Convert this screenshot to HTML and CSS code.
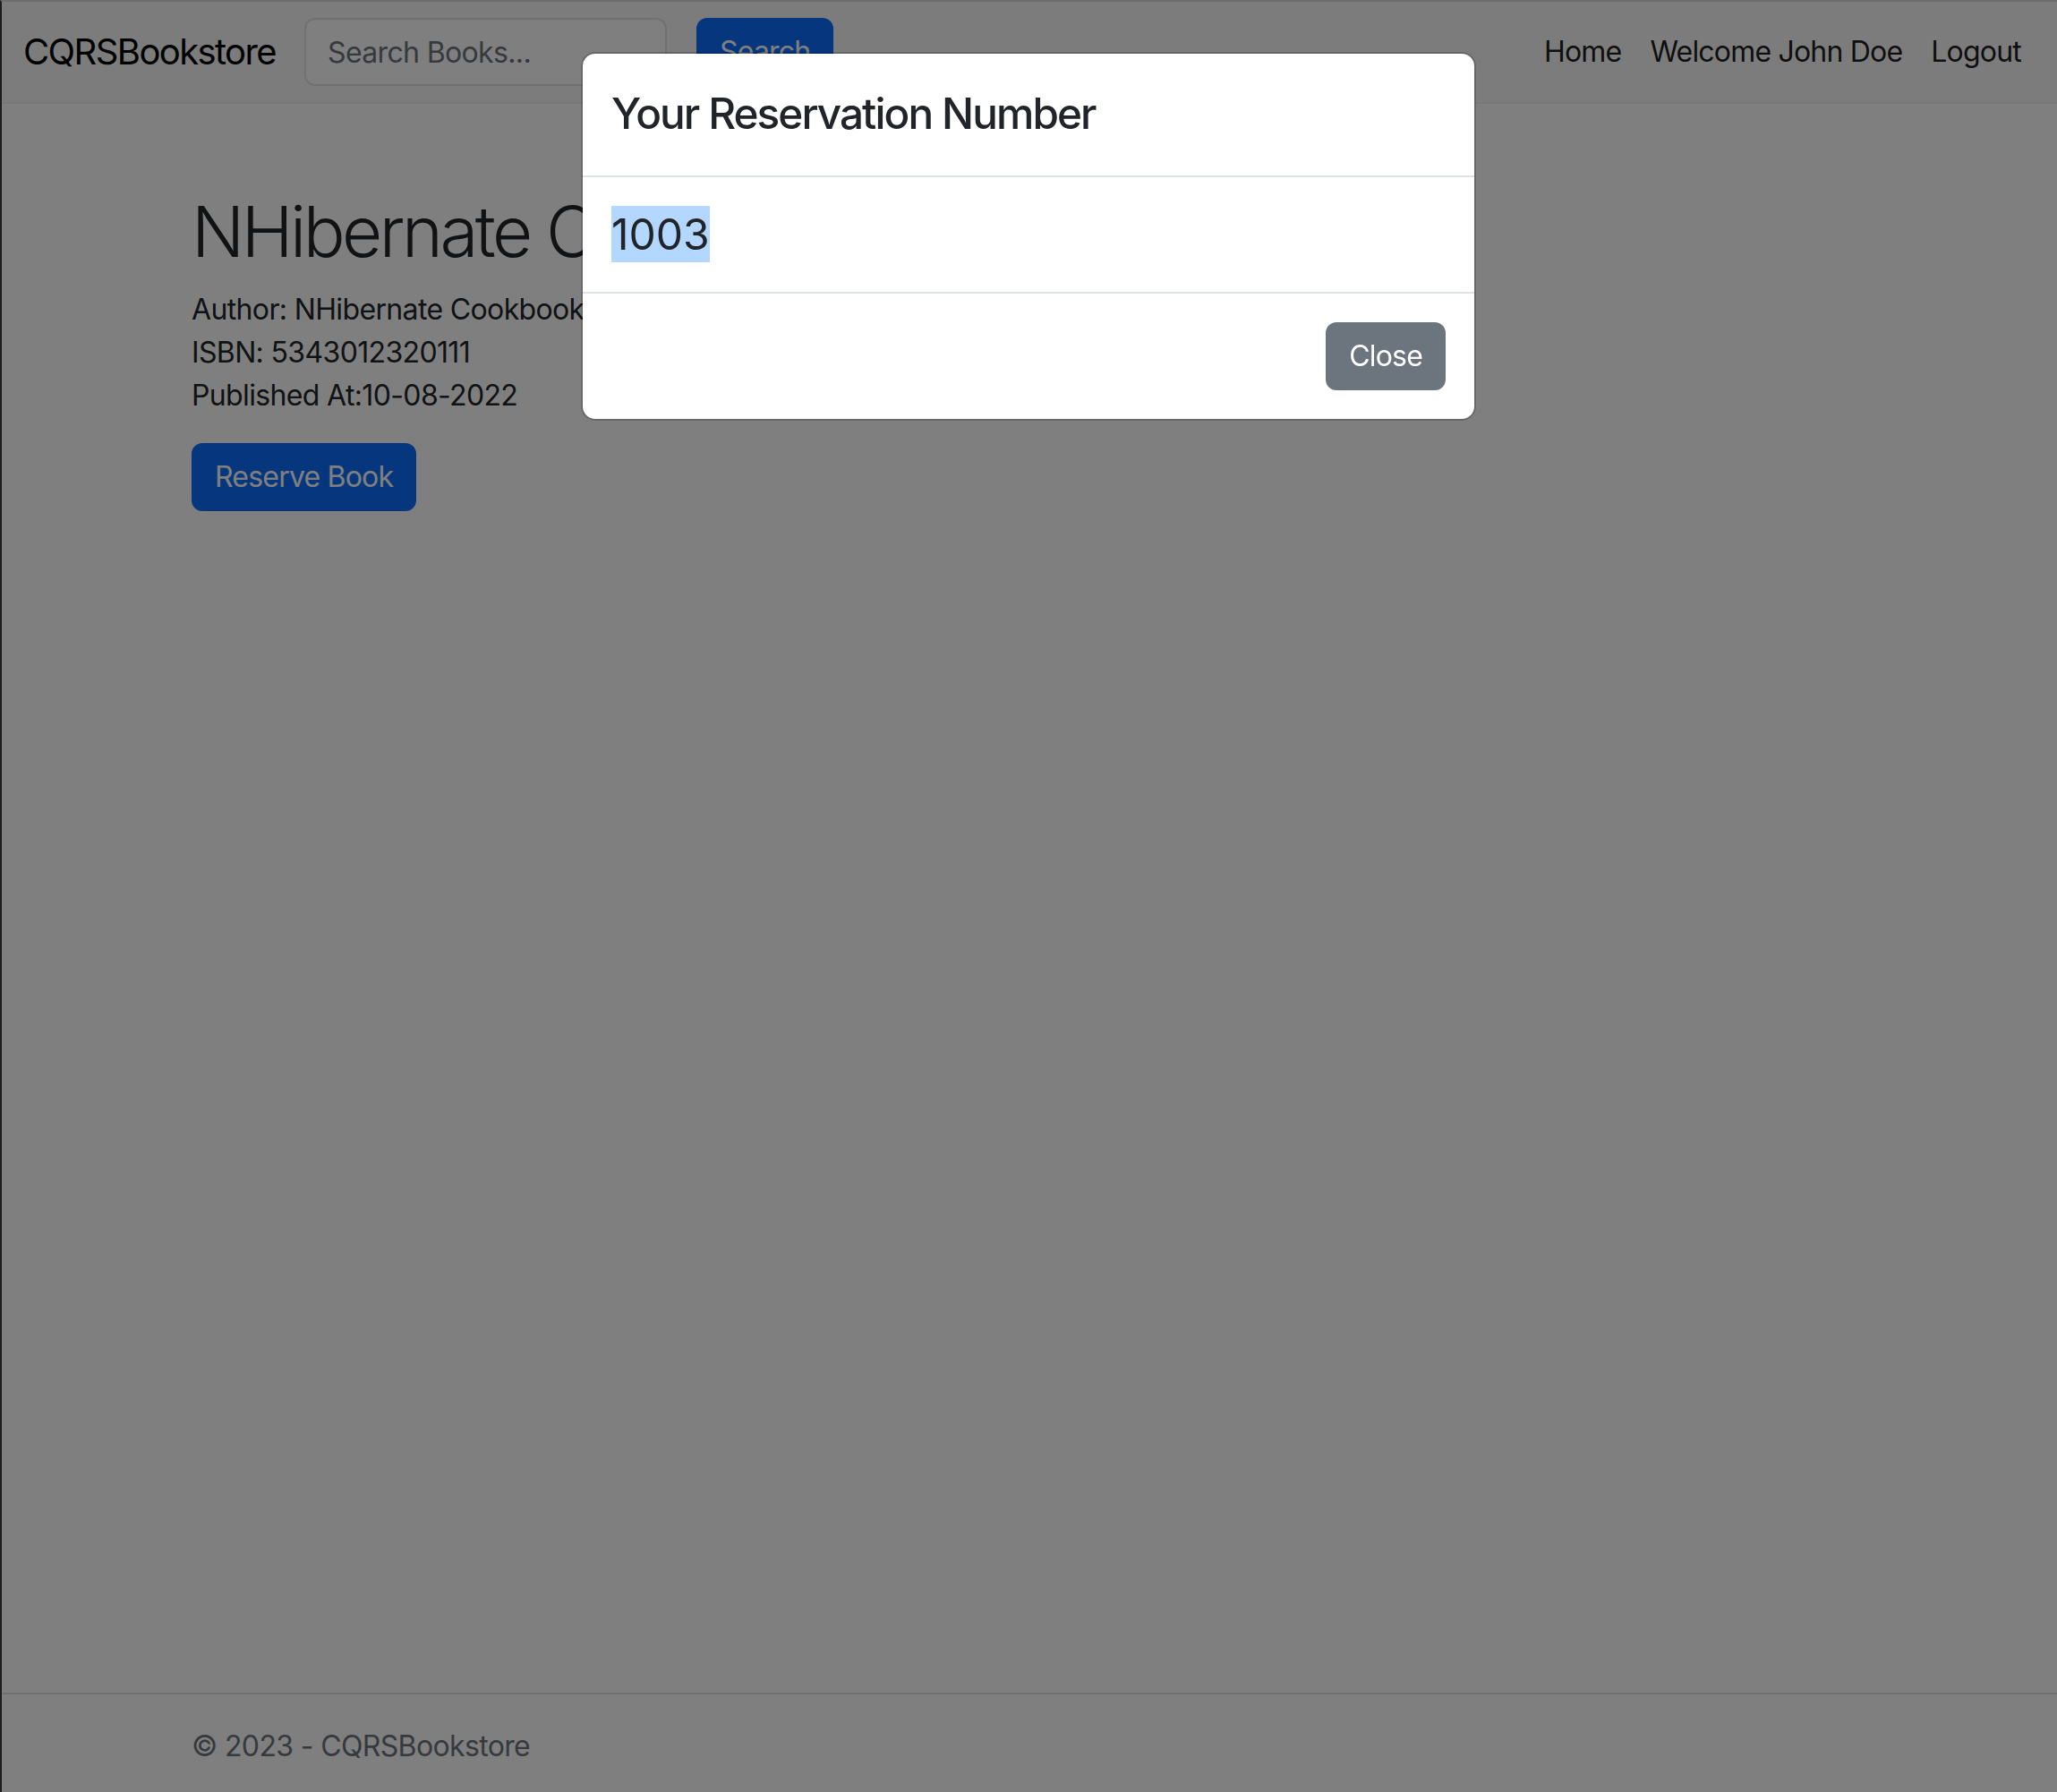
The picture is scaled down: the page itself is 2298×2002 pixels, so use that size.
FILE: index.html
```html
<!DOCTYPE html>
<html lang="en">
<head>
<meta charset="utf-8">
<title>CQRSBookstore</title>
<link rel="stylesheet" href="styles.css">
</head>
<body>
<div class="page">
  <header class="navbar">
    <a class="brand" href="#">CQRSBookstore</a>
    <form class="search">
      <input class="search-input" type="text" placeholder="Search Books...">
      <button class="btn btn-primary" type="button">Search</button>
    </form>
    <nav class="nav">
      <a class="nav-link" href="#">Home</a>
      <span class="nav-link">Welcome John Doe</span>
      <a class="nav-link" href="#">Logout</a>
    </nav>
  </header>
  <main class="main">
    <div class="container">
      <h1 class="title">NHibernate Cookbook</h1>
      <div class="meta">
        <div>Author: NHibernate Cookbook</div>
        <div>ISBN: 5343012320111</div>
        <div>Published At:10-08-2022</div>
      </div>
      <button class="btn btn-primary" type="button">Reserve Book</button>
    </div>
  </main>
  <footer class="footer">
    <div class="container">© 2023 - CQRSBookstore</div>
  </footer>
</div>
<div class="backdrop"></div>
<div class="modal">
  <div class="modal-dialog">
    <div class="modal-header">
      <h4 class="modal-title">Your Reservation Number</h4>
    </div>
    <div class="modal-body">
      <span class="selected">1003</span>
    </div>
    <div class="modal-footer">
      <button class="btn btn-secondary" type="button">Close</button>
    </div>
  </div>
</div>
</body>
</html>
```

FILE: styles.css
```css
html, body {
  margin: 0;
  padding: 0;
  overflow: hidden;
  background: #ffffff;
}
body {
  font-family: Inter, "Liberation Sans", sans-serif;
  font-size: 32px;
  line-height: 1.5;
  letter-spacing: -0.02em;
  color: #212529;
}
.page {
  border-top: 2px solid #dcdcdc;
  border-left: 2px solid #3a3a3a;
  min-height: 2007px;
  display: flex;
  flex-direction: column;
}
.navbar {
  display: flex;
  align-items: center;
  padding: 16px 24px;
  background: #f9f9f9;
  border-bottom: 2px solid #f0f0f0;
}
.brand {
  font-size: 40px;
  line-height: 60px;
  letter-spacing: -0.04em;
  padding: 10px 0;
  margin-right: 32px;
  color: #000;
  text-decoration: none;
  white-space: nowrap;
}
.search {
  display: flex;
  align-items: center;
  gap: 33px;
}
.search-input {
  width: 405px;
  height: 76px;
  box-sizing: border-box;
  padding: 12px 24px;
  font-family: inherit;
  font-size: 32px;
  letter-spacing: -0.02em;
  color: #212529;
  border: 2px solid #dee2e6;
  border-radius: 12px;
  background: #fff;
}
.search-input::placeholder {
  color: #6c757d;
}
.btn {
  font-family: inherit;
  font-size: 32px;
  line-height: 48px;
  letter-spacing: -0.025em;
  padding: 12px 24px;
  border: 2px solid transparent;
  border-radius: 12px;
  cursor: pointer;
}
.btn-primary {
  background: #0d6efd;
  border-color: #0d6efd;
  color: #fff;
}
.btn-secondary {
  background: #6c757d;
  border-color: #6c757d;
  color: #fff;
  margin: 8px;
}
.nav {
  margin-left: auto;
  display: flex;
}
.nav-link {
  padding: 16px;
  line-height: 48px;
  letter-spacing: -0.025em;
  color: rgba(0, 0, 0, 0.9);
  text-decoration: none;
  white-space: nowrap;
}
.main {
  flex: 1;
  padding-top: 96px;
}
.container {
  width: 1920px;
  box-sizing: border-box;
  padding: 0 24px;
  margin: 0 auto;
}
.title {
  font-size: 78px;
  font-weight: 300;
  line-height: 1.2;
  letter-spacing: -0.045em;
  margin: 0 0 16px;
}
.meta {
  margin-bottom: 29px;
}
.footer {
  border-top: 2px solid #dee2e6;
  line-height: 116px;
  color: #6c757d;
  white-space: nowrap;
}
.backdrop {
  position: fixed;
  inset: 0;
  background: rgba(0, 0, 0, 0.5);
}
.modal {
  position: fixed;
  inset: 0;
  padding-top: 58px;
}
.modal-dialog {
  width: 1000px;
  margin: 0 auto;
  box-sizing: border-box;
  background: #fff;
  border: 2px solid rgba(0, 0, 0, 0.175);
  border-radius: 16px;
  background-clip: padding-box;
}
.modal-header {
  padding: 32px;
  border-bottom: 2px solid #dee2e6;
}
.modal-title {
  margin: 0;
  font-size: 47.7px;
  font-weight: 500;
  line-height: 1.5;
  letter-spacing: -0.04em;
}
.modal-body {
  padding: 32px;
  font-size: 48px;
  line-height: 64px;
  letter-spacing: 0;
}
.selected {
  display: inline-block;
  background: #b3d7ff;
  line-height: 63px;
}
.modal-footer {
  display: flex;
  justify-content: flex-end;
  padding: 24px;
  border-top: 2px solid #dee2e6;
}
```
